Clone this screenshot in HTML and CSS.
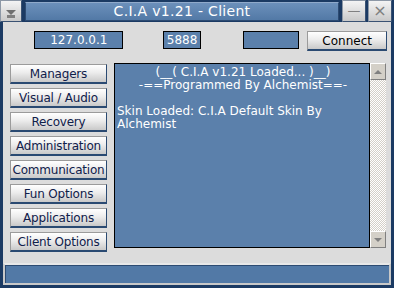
FILE: index.html
```html
<!DOCTYPE html>
<html lang="en">
<head>
  <meta charset="UTF-8">
  <title>C.I.A v1.21 - Client</title>
  <link rel="stylesheet" href="styles.css">
</head>
<body>
  <div class="window">
    <div class="titlebar">
      <div class="tbtn menu-btn"><span class="arrow-down"></span></div>
      <div class="caption">C.I.A v1.21 - Client</div>
      <div class="tbtn">&#8212;</div>
      <div class="tbtn close">&#215;</div>
    </div>

    <div class="content">
      <div class="toprow">
        <div class="field ip">127.0.0.1</div>
        <div class="field port">5888</div>
        <div class="field extra"></div>
        <button class="btn connect">Connect</button>
      </div>

      <div class="main">
        <div class="menu">
          <button class="btn">Managers</button>
          <button class="btn">Visual / Audio</button>
          <button class="btn">Recovery</button>
          <button class="btn">Administration</button>
          <button class="btn">Communication</button>
          <button class="btn">Fun Options</button>
          <button class="btn">Applications</button>
          <button class="btn">Client Options</button>
        </div>
        <div class="logbox">
          <div class="log">
            <p class="center">(__( C.I.A v1.21 Loaded... )__)</p>
            <p class="center">-==Programmed By Alchemist==-</p>
            <p>&nbsp;</p>
            <p>Skin Loaded: C.I.A Default Skin By Alchemist</p>
          </div>
          <div class="scroll">
            <div class="sbtn"><span class="tri up"></span></div>
            <div class="track"></div>
            <div class="sbtn"><span class="tri down"></span></div>
          </div>
        </div>
      </div>
    </div>

    <div class="status"></div>
  </div>
</body>
</html>
```

FILE: styles.css
```css
body {
  margin: 0;
  background: #1b3a63;
  font-family: "DejaVu Sans", Verdana, sans-serif;
}
.window {
  width: 394px;
  height: 288px;
  display: flex;
  flex-direction: column;
  background: #1b3a63;
}
.titlebar {
  height: 22px;
  display: flex;
  gap: 2px;
  padding: 0 2px 0 0;
}
.tbtn {
  width: 22px;
  height: 20px;
  background: linear-gradient(#f4f4f4, #c9c9c9);
  border: 1px solid #8d98a6;
  border-right-color: #3a5273;
  border-bottom-color: #3a5273;
  color: #808080;
  font-size: 13px;
  line-height: 19px;
  text-align: center;
}
.menu-btn {
  width: 20px;
}
.close {
  font-size: 16px;
}
.arrow-down {
  display: inline-block;
  width: 0;
  height: 0;
  border-left: 5px solid transparent;
  border-right: 5px solid transparent;
  border-top: 5px solid #707070;
  margin-top: 5px;
  box-shadow: 0 4px 0 -1px #808080;
}
.caption {
  flex: 1;
  margin: 2px 1px 1px 1px;
  background: linear-gradient(#6c90bb, #5279a6);
  border: 1px solid #2d4b72;
  border-top-color: #90aacb;
  color: #fff;
  font-size: 14px;
  letter-spacing: 0.3px;
  line-height: 16px;
  text-align: center;
}
.content {
  flex: 1;
  background: #dcdcdc;
  margin: 0 3px;
  padding: 9px 4px 0 7px;
}
.toprow {
  display: flex;
  align-items: flex-start;
  height: 24px;
}
.field {
  height: 16px;
  background: #5b80ab;
  border: 1px solid #000;
  color: #fff;
  font-size: 12px;
  line-height: 16px;
  padding-left: 1px;
  text-align: center;
}
.ip { width: 86px; margin-left: 24px; }
.port { width: 35px; margin-left: 40px; }
.extra { width: 54px; margin-left: 42px; }
.btn {
  background: linear-gradient(#ffffff, #ececec 45%, #c9c9c9);
  border: 1px solid #9b9b9b;
  border-bottom: 2px solid #2a4a72;
  border-right-color: #2a4a72;
  color: #10204a;
  font-family: "DejaVu Sans", Verdana, sans-serif;
  font-size: 12px;
  padding: 0;
  height: 20px;
  white-space: nowrap;
}
.connect {
  width: 80px;
  margin-left: 8px;
  height: 20px;
  color: #000;
  font-size: 12px;
}
.main {
  display: flex;
  margin-top: 8px;
}
.menu {
  display: flex;
  flex-direction: column;
  gap: 4px;
  width: 97px;
  padding-top: 1px;
}
.menu .btn {
  width: 97px;
  letter-spacing: -0.2px;
}
.logbox {
  display: flex;
  margin-left: 7px;
  height: 185px;
}
.log {
  width: 256px;
  background: #5b80ab;
  border: 1px solid #000;
  color: #fff;
  font-size: 12px;
  line-height: 13px;
  padding: 2px 0 0 2px;
  box-sizing: border-box;
  height: 185px;
}
.log p {
  margin: 0;
}
.center {
  text-align: center;
}
.scroll {
  width: 16px;
  display: flex;
  flex-direction: column;
  background: repeating-conic-gradient(#ffffff 0 25%, #d4d0c8 0 50%) 0 0 / 2px 2px;
}
.sbtn {
  height: 15px;
  background: #d4d0c8;
  border: 1px solid #fff;
  border-right-color: #808080;
  border-bottom-color: #808080;
  display: flex;
  align-items: center;
  justify-content: center;
}
.track {
  flex: 1;
}
.tri {
  width: 0;
  height: 0;
  border-left: 4px solid transparent;
  border-right: 4px solid transparent;
}
.tri.up { border-bottom: 4px solid #808080; }
.tri.down { border-top: 4px solid #808080; }
.status {
  height: 18px;
  margin: -1px 3px 3px 3px;
  background: #5279a6;
  border: 2px solid #c8c8c8;
  border-top-color: #e8e8e8;
  box-shadow: inset 1px 1px 0 #2d4b72;
}
```
